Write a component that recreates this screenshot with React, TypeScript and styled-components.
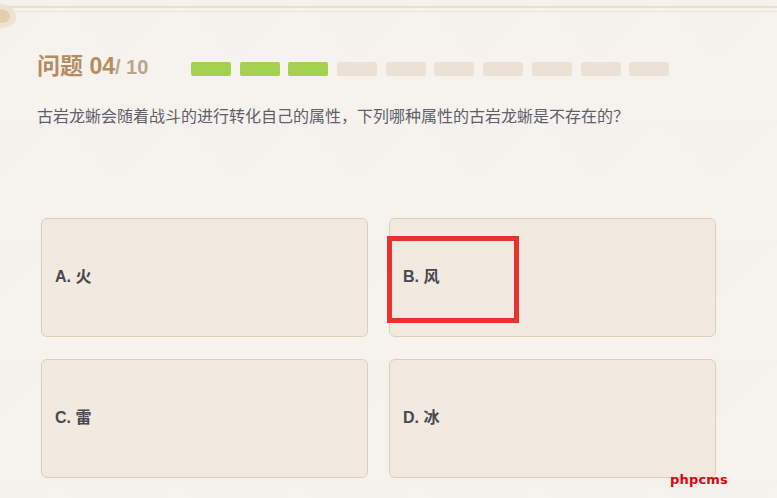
import styled, { createGlobalStyle } from 'styled-components'

const GlobalStyle = createGlobalStyle`
  html, body {
    margin: 0;
    padding: 0;
    background: #f6f3ee;
  }
  * { box-sizing: border-box; }
`

const TOTAL = 10;
const DONE = 3;

const options = [
  { key: 'A', text: '火' },
  { key: 'B', text: '风' },
  { key: 'C', text: '雷' },
  { key: 'D', text: '冰' },
];

const App = () => {
  return (
    <Page>
      <GlobalStyle />
      <TopFrame />
      <Corner width="26" height="30" viewBox="0 0 26 30">
        <path d="M0 4 C10 4 16 10 16 18 C16 24 10 28 0 28 Z" fill="#efe2d0" />
        <path d="M0 9 C6 9 10 12 10 17 C10 21 6 23 0 23 Z" fill="#e4cfb3" />
      </Corner>
      <Content>
        <Header>
          <Title>
            问题 04<Total>/ 10</Total>
          </Title>
          <Progress>
            {Array.from({ length: TOTAL }).map((_, i) => (
              <Segment key={i} $done={i < DONE} />
            ))}
          </Progress>
        </Header>
        <Question>古岩龙蜥会随着战斗的进行转化自己的属性，下列哪种属性的古岩龙蜥是不存在的？</Question>
        <Options>
          {options.map(o => (
            <OptionCard key={o.key}>
              <Label>{o.key}. {o.text}</Label>
            </OptionCard>
          ))}
        </Options>
      </Content>
      <Highlight />
      <Watermark>phpcms</Watermark>
    </Page>
  );
}

const Page = styled.div`
  position: relative;
  width: 777px;
  height: 498px;
  overflow: hidden;
  background-color: #f6f3ee;
  background-image:
    linear-gradient(135deg, rgba(238,231,221,0.12) 25%, transparent 25%),
    linear-gradient(225deg, rgba(238,231,221,0.12) 25%, transparent 25%);
  background-size: 120px 120px;
  font-family: "Liberation Sans", "Noto Sans CJK SC", sans-serif;
`
const TopFrame = styled.div`
  margin-top: 6px;
  height: 6px;
  border-top: 2px solid #ecdfcd;
  border-bottom: 1px solid #efe4d6;
`
const Corner = styled.svg`
  position: absolute;
  left: 0;
  top: 0;
`
const Content = styled.div`
  padding: 44px 0 0 37px;
`
const Header = styled.div`
  display: flex;
  align-items: center;
  gap: 39px;
  height: 26px;
`
const Title = styled.h1`
  margin: 0 0 6px;
  width: 115px;
  line-height: 24px;
  font-family: "Liberation Sans", "Noto Sans CJK SC", sans-serif;
  font-size: 23px;
  font-weight: 700;
  color: #b58c5f;
  white-space: nowrap;
`
const Total = styled.span`
  font-size: 20px;
  color: #b9a690;
`
const Progress = styled.div`
  display: flex;
  gap: 8.7px;
`
const Segment = styled.div<{ $done: boolean }>`
  width: 40px;
  height: 14px;
  border-radius: 2px;
  background: ${p => (p.$done ? '#a3d04f' : '#ebe1d5')};
`
const Question = styled.p`
  margin: 21px 0 0;
  font-family: "Noto Sans CJK SC", sans-serif;
  font-size: 16px;
  line-height: 24px;
  color: #5d5f6b;
`
const Options = styled.div`
  display: grid;
  grid-template-columns: 327px 327px;
  grid-auto-rows: 119px;
  column-gap: 21px;
  row-gap: 22px;
  margin: 91px 0 0 4px;
`
const OptionCard = styled.div`
  display: flex;
  align-items: center;
  padding: 0 13px 6px;
  background: #f2e9e0;
  border: 1px solid #dccebd;
  border-radius: 6px;
`
const Label = styled.span`
  font-family: "Liberation Sans", "Noto Sans CJK SC", sans-serif;
  font-size: 16px;
  font-weight: 700;
  color: #464853;
`
const Highlight = styled.div`
  position: absolute;
  left: 387px;
  top: 236px;
  width: 132px;
  height: 87px;
  border: 5px solid #e8322f;
`
const Watermark = styled.div`
  position: absolute;
  left: 670px;
  top: 472px;
  font-family: "DejaVu Sans", sans-serif;
  font-size: 13px;
  font-weight: 600;
  color: #d8070b;
  letter-spacing: 0.2px;
`

export default App
